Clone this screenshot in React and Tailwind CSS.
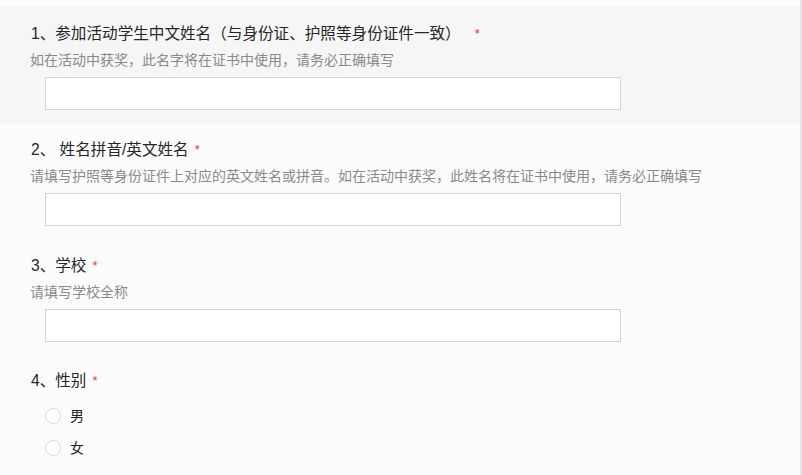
import React from "react";

const fontStack = { fontFamily: '"Liberation Sans", "Noto Sans CJK SC", sans-serif' };

const Star = ({ wide }) => (
    <span className={`${wide ? "ml-[14px]" : "ml-[6px]"} align-top text-[13px] leading-[20px] text-[#e4393c]`}>*</span>
);

const TextQuestion = ({ title, hint, shaded, first }) => (
    <div className={`${shaded ? "bg-[#f6f6f6]" : "bg-[#fcfcfc]"} ${first ? "pt-[16px]" : "pt-[15px]"} pb-[13px] pl-[30px]`}>
        <div className="flex h-[24px] items-center pl-px text-[15.6px] text-[#262626]">
            {title}
            <Star wide={first} />
        </div>
        <p className="mt-1 h-[20px] text-[14px] leading-[20px] text-[#8a8a8a]">{hint}</p>
        <div className="ml-[15px] mt-[7px] h-[33px] w-[576px] border border-[#d4d4d4] bg-white" />
    </div>
);

const Radio = ({ label }) => (
    <label className="flex h-[32px] items-center gap-[9px]">
        <span className="h-[16px] w-[16px] rounded-full border border-[#dcdcdc] bg-white" />
        <span className="text-[14px] text-[#222]">{label}</span>
    </label>
);

export default function App() {
    return (
        <div className="flex h-[475px] w-[802px] overflow-hidden bg-[#fcfcfc]" style={fontStack}>
            <div className="flex-1 pt-[6px]">
                <TextQuestion
                    shaded
                    first
                    title="1、参加活动学生中文姓名（与身份证、护照等身份证件一致）"
                    hint="如在活动中获奖，此名字将在证书中使用，请务必正确填写"
                />
                <TextQuestion
                    title="2、 姓名拼音/英文姓名"
                    hint="请填写护照等身份证件上对应的英文姓名或拼音。如在活动中获奖，此姓名将在证书中使用，请务必正确填写"
                />
                <TextQuestion title="3、学校" hint="请填写学校全称" />
                <div className="pl-[30px] pt-[14px]">
                    <div className="flex h-[24px] items-center pl-px text-[15.6px] text-[#262626]">
                        4、性别
                        <Star />
                    </div>
                    <div className="mt-[7px] flex flex-col pl-[15px]">
                        <Radio label="男" />
                        <Radio label="女" />
                    </div>
                </div>
            </div>
            <div className="w-[2px] bg-[#e6e6ee]" />
        </div>
    );
}
